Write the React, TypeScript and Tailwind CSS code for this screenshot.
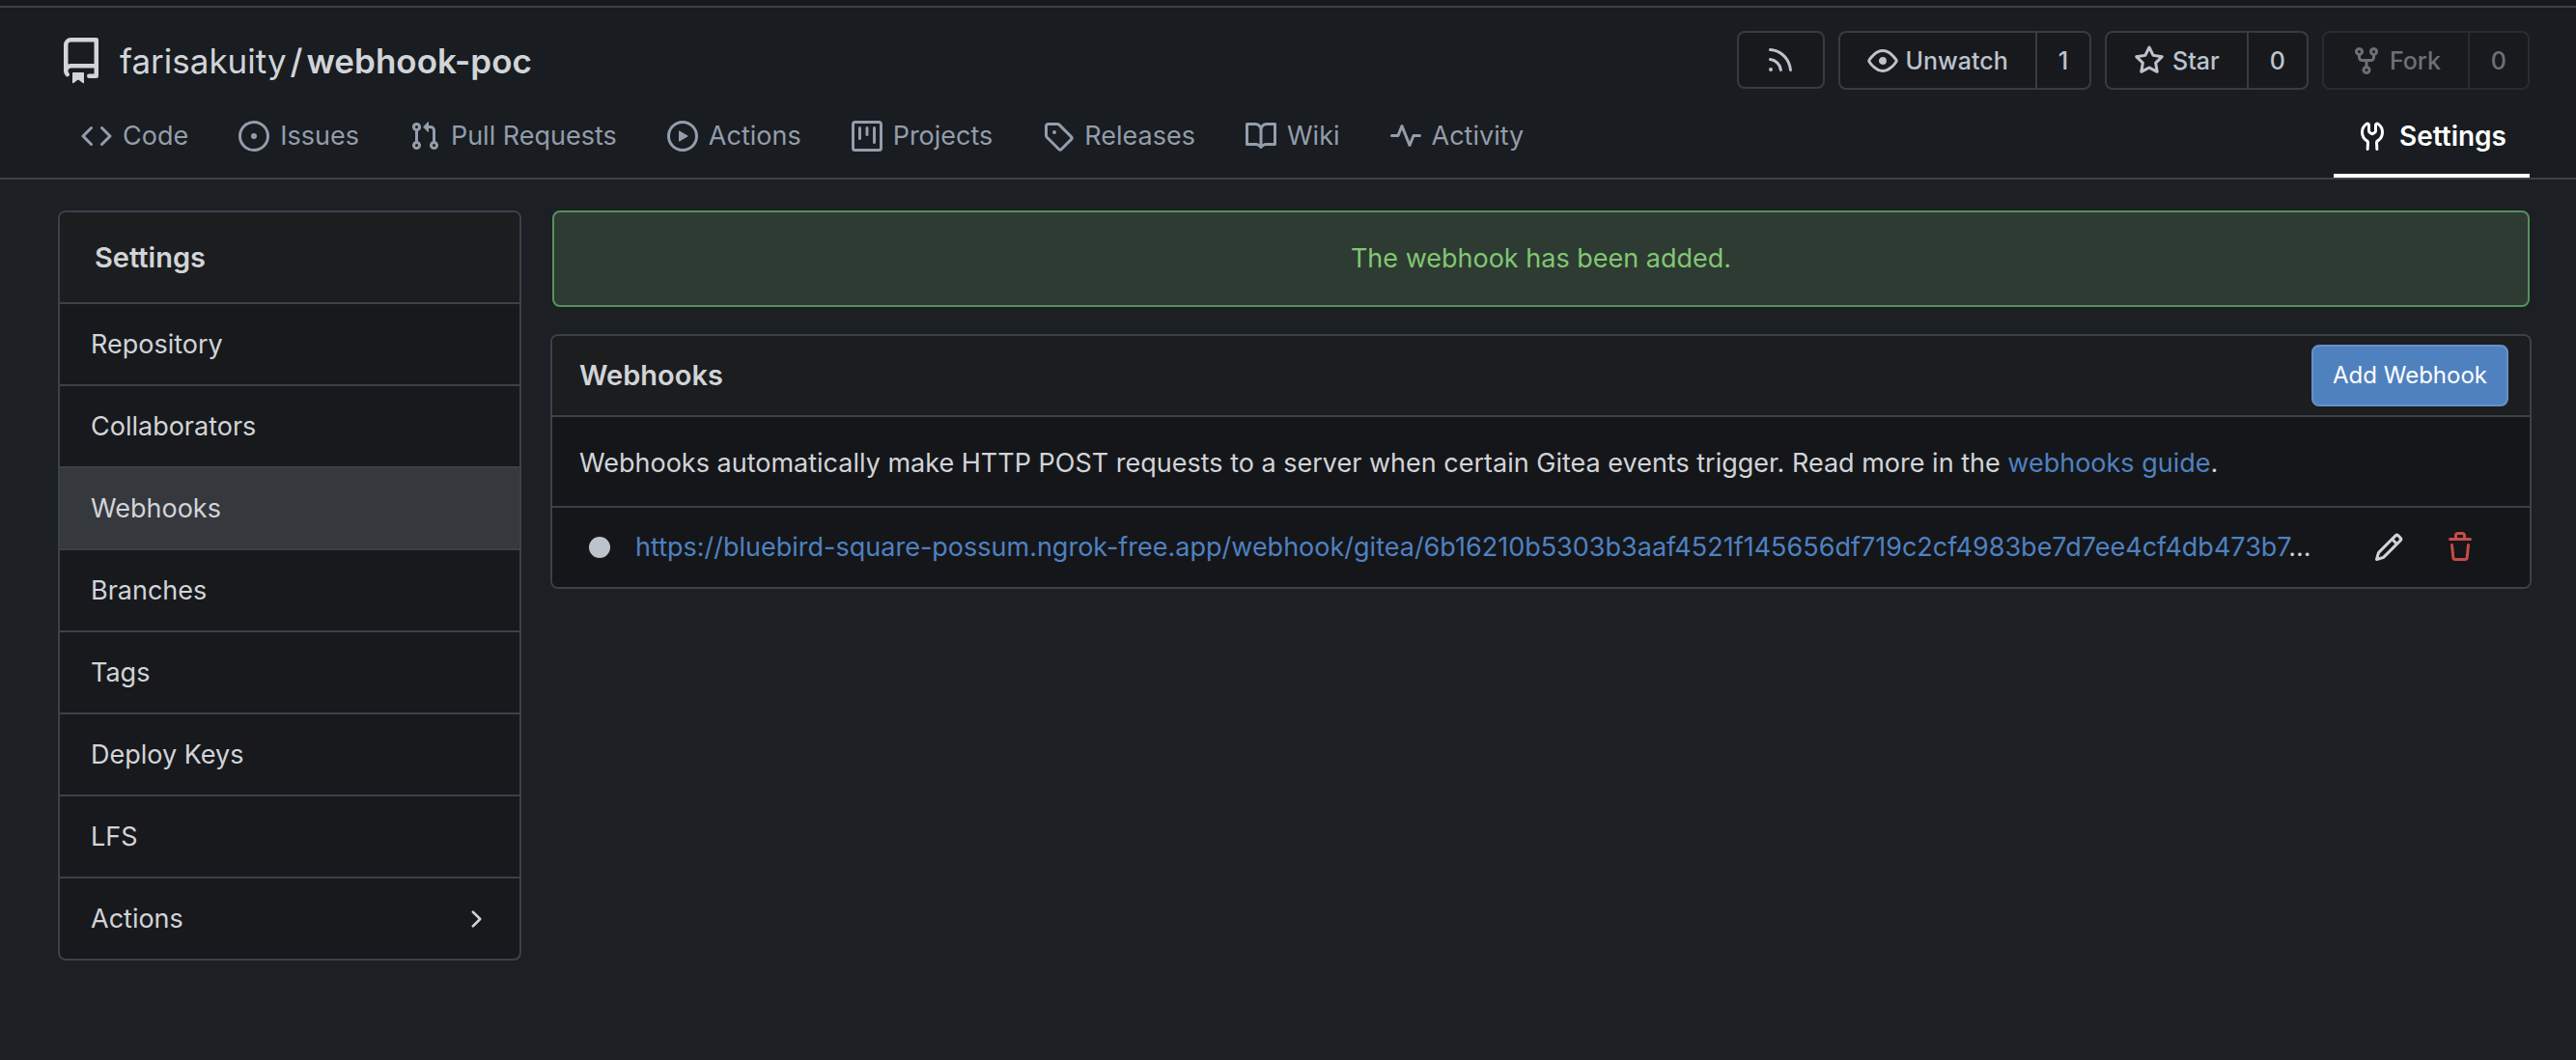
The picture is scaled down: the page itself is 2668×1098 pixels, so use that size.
import type { ReactNode } from "react";

const paths = {
  repo: "M2 2.5A2.5 2.5 0 0 1 4.5 0h8.75a.75.75 0 0 1 .75.75v12.5a.75.75 0 0 1-.75.75h-2.5a.75.75 0 0 1 0-1.5h1.75v-2h-8a1 1 0 0 0-.714 1.7.75.75 0 1 1-1.072 1.05A2.495 2.495 0 0 1 2 11.5Zm10.5-1h-8a1 1 0 0 0-1 1v6.708A2.486 2.486 0 0 1 4.5 9h8ZM5 12.25a.25.25 0 0 1 .25-.25h3.5a.25.25 0 0 1 .25.25v3.25a.25.25 0 0 1-.4.2l-1.45-1.087a.249.249 0 0 0-.3 0L5.4 15.7a.25.25 0 0 1-.4-.2Z",
  code: "m11.28 3.22 4.25 4.25a.75.75 0 0 1 0 1.06l-4.25 4.25a.749.749 0 0 1-1.275-.326.749.749 0 0 1 .215-.734L13.94 8l-3.72-3.72a.749.749 0 0 1 .326-1.275.749.749 0 0 1 .734.215Zm-6.56 0a.751.751 0 0 1 1.042.018.751.751 0 0 1 .018 1.042L2.06 8l3.72 3.72a.749.749 0 0 1-.326 1.275.749.749 0 0 1-.734-.215L.47 8.53a.75.75 0 0 1 0-1.06Z",
  issue: "M8 9.5a1.5 1.5 0 1 0 0-3 1.5 1.5 0 0 0 0 3ZM8 0a8 8 0 1 1 0 16A8 8 0 0 1 8 0ZM1.5 8a6.5 6.5 0 1 0 13 0 6.5 6.5 0 0 0-13 0Z",
  pull: "M1.5 3.25a2.25 2.25 0 1 1 3 2.122v5.256a2.251 2.251 0 1 1-1.5 0V5.372A2.25 2.25 0 0 1 1.5 3.25Zm5.677-.177L9.573.677A.25.25 0 0 1 10 .854V2.5h1A2.5 2.5 0 0 1 13.5 5v5.628a2.251 2.251 0 1 1-1.5 0V5a1 1 0 0 0-1-1h-1v1.646a.25.25 0 0 1-.427.177L7.177 3.427a.25.25 0 0 1 0-.354ZM3.75 2.5a.75.75 0 1 0 0 1.5.75.75 0 0 0 0-1.5Zm0 9.5a.75.75 0 1 0 0 1.5.75.75 0 0 0 0-1.5Zm8.25.75a.75.75 0 1 0 1.5 0 .75.75 0 0 0-1.5 0Z",
  play: "M8 0a8 8 0 1 1 0 16A8 8 0 0 1 8 0ZM1.5 8a6.5 6.5 0 1 0 13 0 6.5 6.5 0 0 0-13 0Zm4.879-2.773 4.264 2.559a.25.25 0 0 1 0 .428l-4.264 2.559A.25.25 0 0 1 6 10.559V5.442a.25.25 0 0 1 .379-.215Z",
  project: "M1.75 0h12.5C15.216 0 16 .784 16 1.75v12.5A1.75 1.75 0 0 1 14.25 16H1.75A1.75 1.75 0 0 1 0 14.25V1.75C0 .784.784 0 1.75 0ZM1.5 1.75v12.5c0 .138.112.25.25.25h12.5a.25.25 0 0 0 .25-.25V1.75a.25.25 0 0 0-.25-.25H1.75a.25.25 0 0 0-.25.25ZM11.75 3a.75.75 0 0 1 .75.75v7.5a.75.75 0 0 1-1.5 0v-7.5a.75.75 0 0 1 .75-.75Zm-8.25.75a.75.75 0 0 1 1.5 0v5.5a.75.75 0 0 1-1.5 0ZM8 3a.75.75 0 0 1 .75.75v3.5a.75.75 0 0 1-1.5 0v-3.5A.75.75 0 0 1 8 3Z",
  tag: "M1 7.775V2.75C1 1.784 1.784 1 2.75 1h5.025c.464 0 .91.184 1.238.513l6.25 6.25a1.75 1.75 0 0 1 0 2.474l-5.026 5.026a1.75 1.75 0 0 1-2.474 0l-6.25-6.25A1.752 1.752 0 0 1 1 7.775Zm1.5 0c0 .066.026.13.073.177l6.25 6.25a.25.25 0 0 0 .354 0l5.025-5.025a.25.25 0 0 0 0-.354l-6.25-6.25a.25.25 0 0 0-.177-.073H2.75a.25.25 0 0 0-.25.25ZM6 5a1 1 0 1 1 0 2 1 1 0 0 1 0-2Z",
  book: "M0 1.75A.75.75 0 0 1 .75 1h4.253c1.227 0 2.317.59 3 1.501A3.743 3.743 0 0 1 11.006 1h4.245a.75.75 0 0 1 .75.75v10.5a.75.75 0 0 1-.75.75h-4.507a2.25 2.25 0 0 0-1.591.659l-.622.621a.75.75 0 0 1-1.06 0l-.622-.621A2.25 2.25 0 0 0 5.258 13H.75a.75.75 0 0 1-.75-.75Zm7.251 10.324.004-5.073-.002-2.253A2.25 2.25 0 0 0 5.003 2.5H1.5v9h3.757a3.75 3.75 0 0 1 1.994.574ZM8.755 4.75l-.004 7.322a3.752 3.752 0 0 1 1.992-.572H14.5v-9h-3.495a2.25 2.25 0 0 0-2.25 2.25Z",
  pulse: "M6 2c.306 0 .582.187.696.471L10 10.731l1.304-3.26A.751.751 0 0 1 12 7h3.25a.75.75 0 0 1 0 1.5h-2.742l-1.812 4.528a.751.751 0 0 1-1.392 0L6 4.77 4.696 8.03A.75.75 0 0 1 4 8.5H.75a.75.75 0 0 1 0-1.5h2.742l1.812-4.529A.751.751 0 0 1 6 2Z",
  rss: "M2.002 2.725a.75.75 0 0 1 .797-.699C8.79 2.42 13.58 7.21 13.974 13.201a.75.75 0 0 1-1.497.098 10.502 10.502 0 0 0-9.776-9.776.747.747 0 0 1-.7-.798ZM2.84 7.05h-.002a7.002 7.002 0 0 1 6.113 6.111.75.75 0 0 1-1.49.178 5.503 5.503 0 0 0-4.8-4.8.75.75 0 0 1 .179-1.489ZM2 13a1 1 0 1 1 2 0 1 1 0 0 1-2 0Z",
  eye: "M8 2c1.981 0 3.671.992 4.933 2.078 1.27 1.091 2.187 2.345 2.637 3.023a1.62 1.62 0 0 1 0 1.798c-.45.678-1.367 1.932-2.637 3.023C11.67 13.008 9.981 14 8 14c-1.981 0-3.671-.992-4.933-2.078C1.797 10.83.88 9.576.43 8.898a1.62 1.62 0 0 1 0-1.798c.45-.677 1.367-1.931 2.637-3.022C4.33 2.992 6.019 2 8 2ZM1.679 7.932a.12.12 0 0 0 0 .136c.411.622 1.241 1.75 2.366 2.717C5.176 11.758 6.527 12.5 8 12.5c1.473 0 2.825-.742 3.955-1.715 1.124-.967 1.954-2.096 2.366-2.717a.12.12 0 0 0 0-.136c-.412-.621-1.242-1.75-2.366-2.717C10.824 4.242 9.473 3.5 8 3.5c-1.473 0-2.825.742-3.955 1.715-1.124.967-1.954 2.096-2.366 2.717ZM8 10a2 2 0 1 1-.001-3.999A2 2 0 0 1 8 10Z",
  star: "M8 .25a.75.75 0 0 1 .673.418l1.882 3.815 4.21.612a.75.75 0 0 1 .416 1.279l-3.046 2.97.719 4.192a.751.751 0 0 1-1.088.791L8 12.347l-3.766 1.98a.75.75 0 0 1-1.088-.79l.72-4.194L.818 6.374a.75.75 0 0 1 .416-1.28l4.21-.611L7.327.668A.75.75 0 0 1 8 .25Zm0 2.445L6.615 5.5a.75.75 0 0 1-.564.41l-3.097.45 2.24 2.184a.75.75 0 0 1 .216.664l-.528 3.084 2.769-1.456a.75.75 0 0 1 .698 0l2.77 1.456-.53-3.084a.75.75 0 0 1 .216-.664l2.24-2.183-3.096-.45a.75.75 0 0 1-.564-.41L8 2.694Z",
  fork: "M5 5.372v.878c0 .414.336.75.75.75h4.5a.75.75 0 0 0 .75-.75v-.878a2.25 2.25 0 1 1 1.5 0v.878a2.25 2.25 0 0 1-2.25 2.25h-1.5v2.128a2.251 2.251 0 1 1-1.5 0V8.5h-1.5A2.25 2.25 0 0 1 3.5 6.25v-.878a2.25 2.25 0 1 1 1.5 0ZM5 3.25a.75.75 0 1 0-1.5 0 .75.75 0 0 0 1.5 0Zm6.75.75a.75.75 0 1 0 0-1.5.75.75 0 0 0 0 1.5Zm-3 8.75a.75.75 0 1 0-1.5 0 .75.75 0 0 0 1.5 0Z",
  tools: "M5.433 2.304A4.494 4.494 0 0 0 3.5 6c0 1.598.832 3.002 2.09 3.802.518.328.929.923.902 1.64v.008l-.164 3.337a.75.75 0 1 1-1.498-.073l.163-3.33c.002-.085-.05-.216-.207-.316A5.996 5.996 0 0 1 2 6a5.993 5.993 0 0 1 2.567-4.92 1.482 1.482 0 0 1 1.673-.04c.462.296.76.827.76 1.423v2.82c0 .082.041.16.11.206l.75.51a.25.25 0 0 0 .28 0l.75-.51A.249.249 0 0 0 9 5.282V2.463c0-.596.298-1.127.76-1.423a1.482 1.482 0 0 1 1.673.04A5.993 5.993 0 0 1 14 6a5.996 5.996 0 0 1-2.786 5.068c-.157.1-.209.23-.207.315l.163 3.33a.752.752 0 0 1-1.094.714.75.75 0 0 1-.404-.64l-.164-3.345c-.027-.717.384-1.312.902-1.64A4.495 4.495 0 0 0 12.5 6a4.494 4.494 0 0 0-1.933-3.696c-.024.017-.067.067-.067.16v2.818a1.75 1.75 0 0 1-.767 1.448l-.75.51a1.75 1.75 0 0 1-1.966 0l-.75-.51A1.75 1.75 0 0 1 5.5 5.282V2.463c0-.092-.043-.142-.067-.159Z",
  pencil: "M11.013 1.427a1.75 1.75 0 0 1 2.474 0l1.086 1.086a1.75 1.75 0 0 1 0 2.474l-8.61 8.61c-.21.21-.47.364-.756.445l-3.251.93a.75.75 0 0 1-.927-.928l.929-3.25c.081-.286.235-.547.445-.758l8.61-8.61Zm.176 4.823L9.75 4.81l-6.286 6.287a.253.253 0 0 0-.064.108l-.558 1.953 1.953-.558a.253.253 0 0 0 .108-.064Zm1.238-3.763a.25.25 0 0 0-.354 0L10.811 3.75l1.439 1.44 1.263-1.263a.25.25 0 0 0 0-.354Z",
  trash: "M11 1.75V3h2.25a.75.75 0 0 1 0 1.5H2.75a.75.75 0 0 1 0-1.5H5V1.75C5 .784 5.784 0 6.75 0h2.5C10.216 0 11 .784 11 1.75ZM4.496 6.675l.66 6.6a.25.25 0 0 0 .249.225h5.19a.25.25 0 0 0 .249-.225l.66-6.6a.75.75 0 0 1 1.492.149l-.66 6.6A1.748 1.748 0 0 1 10.595 15h-5.19a1.75 1.75 0 0 1-1.741-1.575l-.66-6.6a.75.75 0 1 1 1.492-.15ZM6.5 1.75V3h3V1.75a.25.25 0 0 0-.25-.25h-2.5a.25.25 0 0 0-.25.25Z",
  chevron: "M6.22 3.22a.75.75 0 0 1 1.06 0l4.25 4.25a.75.75 0 0 1 0 1.06l-4.25 4.25a.751.751 0 0 1-1.042-.018.751.751 0 0 1-.018-1.042L9.94 8 6.22 4.28a.75.75 0 0 1 0-1.06Z",
};

type IconName = keyof typeof paths;

function Icon({ name, className = "size-8" }: { name: IconName; className?: string }) {
  return (
    <svg viewBox="0 0 16 16" fill="currentColor" aria-hidden="true" className={`shrink-0 ${className}`}>
      <path d={paths[name]} />
    </svg>
  );
}

const tabs: { icon: IconName; label: string }[] = [
  { icon: "code", label: "Code" },
  { icon: "issue", label: "Issues" },
  { icon: "pull", label: "Pull Requests" },
  { icon: "play", label: "Actions" },
  { icon: "project", label: "Projects" },
  { icon: "tag", label: "Releases" },
  { icon: "book", label: "Wiki" },
  { icon: "pulse", label: "Activity" },
];

const sections = ["Repository", "Collaborators", "Webhooks", "Branches", "Tags", "Deploy Keys", "LFS"];

function CountButton({ icon, label, count, disabled = false }: { icon: IconName; label: string; count: number; disabled?: boolean }) {
  return (
    <div
      className={`flex h-[61px] rounded-lg border-2 border-[#393b40] bg-[#18191d] text-[25px] font-medium text-[#bcc3cd] ${disabled ? "opacity-50" : ""}`}
    >
      <button type="button" disabled={disabled} className="flex items-center gap-2 px-7">
        <Icon name={icon} />
        {label}
      </button>
      <a href="#" className="flex items-center justify-center border-l-2 border-[#393b40] px-[22px]">
        {count}
      </a>
    </div>
  );
}

function Row({ children }: { children: ReactNode }) {
  return <div className="flex items-center border-t-2 border-[#3b4148] bg-[#15161a] px-7">{children}</div>;
}

export default function App() {
  return (
    <div className="min-h-screen bg-[#1c1f24] font-[Inter,'Liberation_Sans',sans-serif] text-[27px] leading-9 text-[#d1d4d8]">
      <div className="h-2 border-b-2 border-[#3b4148] bg-[#18191d]" />
      <header className="border-b-2 border-[#3b4148] bg-[#191c20]">
        <div className="flex items-center justify-between pt-6 pr-12 pl-[60px]">
          <div className="flex items-center">
            <Icon name="repo" className="mr-4 size-12" />
            <h1 className="flex gap-1 text-[35px] leading-[60px]">
              <a href="#">farisakuity</a>
              <span className="font-medium">/</span>
              <a href="#" className="font-semibold">webhook-poc</a>
            </h1>
          </div>
          <div className="flex items-start gap-3.5">
            <a href="#" aria-label="RSS feed" className="flex h-[60px] w-[91px] items-center justify-center rounded-lg border-2 border-[#393b40] bg-[#18191d] text-[#bcc3cd]">
              <Icon name="rss" />
            </a>
            <CountButton icon="eye" label="Unwatch" count={1} />
            <CountButton icon="star" label="Star" count={0} />
            <CountButton icon="fork" label="Fork" count={0} disabled />
          </div>
        </div>
        <nav className="flex justify-between pt-1 pr-12 pl-[60px] text-[#939dab]">
          <div className="flex gap-1">
            {tabs.map((tab) => (
              <a key={tab.label} href="#" className="flex h-[87px] items-center gap-[11px] border-b-4 border-transparent px-6 pt-1">
                <Icon name={tab.icon} />
                {tab.label}
              </a>
            ))}
          </div>
          <a href="#" aria-current="page" className="flex h-[87px] items-center gap-3 border-b-4 border-white px-6 pt-1 text-[28px] font-semibold text-white">
            <Icon name="tools" />
            Settings
          </a>
        </nav>
      </header>

      <div className="flex items-start gap-[30px] py-8 pr-[46px] pl-[60px]">
        <nav aria-label="Settings" className="w-[480px] shrink-0 overflow-hidden rounded-lg border-2 border-[#3b4148] bg-[#18191d]">
          <h2 className="bg-[#1c1d1f] px-9 text-[29px] leading-[93px] font-semibold">Settings</h2>
          {sections.map((name) => (
            <a
              key={name}
              href="#"
              className={`block border-t-2 border-[#3b4148] px-8 leading-[83px] ${name === "Webhooks" ? "bg-[#35383d]" : ""}`}
            >
              {name}
            </a>
          ))}
          <button type="button" aria-expanded="false" className="flex w-full items-center justify-between border-t-2 border-[#3b4148] px-8 leading-[83px]">
            Actions
            <Icon name="chevron" className="size-7" />
          </button>
        </nav>

        <main className="min-w-0 flex-1">
          <p role="status" className="mx-0.5 mb-7 rounded-lg border-2 border-[#55915d] bg-[#2d3b33] text-center leading-[96px] text-[#83c671]">
            The webhook has been added.
          </p>
          <section className="overflow-hidden rounded-lg border-2 border-[#3b4148]">
            <div className="flex h-[82px] items-center justify-between bg-[#1c1d1f] pr-[22px] pl-7">
              <h2 className="text-[29px] font-semibold">Webhooks</h2>
              <button type="button" className="h-16 rounded-lg border-2 border-[#6391cd] bg-[#5081bf] px-5 text-2xl text-white">
                Add Webhook
              </button>
            </div>
            <Row>
              <p className="pt-[30px] pb-[26px]">
                Webhooks automatically make HTTP POST requests to a server when certain Gitea events trigger. Read more in the{" "}
                <a href="#" className="text-[#4f81c0]">webhooks guide</a>.
              </p>
            </Row>
            <Row>
              <span className="mr-[26px] ml-2.5 size-[22px] shrink-0 rounded-full bg-[#bcc3cd]" />
              <p className="min-w-0 flex-1 truncate leading-[82px]">
                <a href="#" className="text-[#4f81c0]">
                  https://bluebird-square-possum.ngrok-free.app/webhook/gitea/6b16210b5303b3aaf4521f145656df719c2cf4983be7d7ee4cf4db473b7
                </a>
                ...
              </p>
              <div className="mr-7 ml-8 flex gap-[42px]">
                <button type="button" aria-label="Edit webhook">
                  <Icon name="pencil" />
                </button>
                <button type="button" aria-label="Remove webhook" className="text-[#c84b48]">
                  <Icon name="trash" />
                </button>
              </div>
            </Row>
          </section>
        </main>
      </div>
    </div>
  );
}
